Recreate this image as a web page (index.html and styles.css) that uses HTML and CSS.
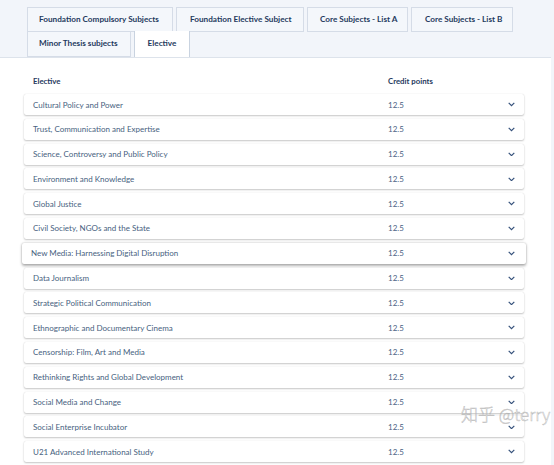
FILE: index.html
```html
<!DOCTYPE html>
<html>
<head>
<meta charset="utf-8">
<link rel="stylesheet" href="styles.css">
</head>
<body>
<div class="tabs">
  <div class="tab-row">
    <div class="tab">Foundation Compulsory Subjects</div>
    <div class="tab">Foundation Elective Subject</div>
    <div class="tab">Core Subjects - List A</div>
    <div class="tab">Core Subjects - List B</div>
  </div>
  <div class="tab-row second">
    <div class="tab">Minor Thesis subjects</div>
    <div class="tab active">Elective</div>
  </div>
</div>
<div class="content">
  <div class="head">
    <span class="c-name">Elective</span>
    <span class="c-cp">Credit points</span>
  </div>
  <div class="list">
    <div class="row"><span class="c-name">Cultural Policy and Power</span><span class="c-cp">12.5</span><span class="chev"><svg viewBox="0 0 10 6" width="7" height="4.5"><path d="M1 1l4 4 4-4" fill="none" stroke="#34507a" stroke-width="1.7"/></svg></span></div>
    <div class="row"><span class="c-name">Trust, Communication and Expertise</span><span class="c-cp">12.5</span><span class="chev"><svg viewBox="0 0 10 6" width="7" height="4.5"><path d="M1 1l4 4 4-4" fill="none" stroke="#34507a" stroke-width="1.7"/></svg></span></div>
    <div class="row"><span class="c-name">Science, Controversy and Public Policy</span><span class="c-cp">12.5</span><span class="chev"><svg viewBox="0 0 10 6" width="7" height="4.5"><path d="M1 1l4 4 4-4" fill="none" stroke="#34507a" stroke-width="1.7"/></svg></span></div>
    <div class="row"><span class="c-name">Environment and Knowledge</span><span class="c-cp">12.5</span><span class="chev"><svg viewBox="0 0 10 6" width="7" height="4.5"><path d="M1 1l4 4 4-4" fill="none" stroke="#34507a" stroke-width="1.7"/></svg></span></div>
    <div class="row"><span class="c-name">Global Justice</span><span class="c-cp">12.5</span><span class="chev"><svg viewBox="0 0 10 6" width="7" height="4.5"><path d="M1 1l4 4 4-4" fill="none" stroke="#34507a" stroke-width="1.7"/></svg></span></div>
    <div class="row"><span class="c-name">Civil Society, NGOs and the State</span><span class="c-cp">12.5</span><span class="chev"><svg viewBox="0 0 10 6" width="7" height="4.5"><path d="M1 1l4 4 4-4" fill="none" stroke="#34507a" stroke-width="1.7"/></svg></span></div>
    <div class="row hover"><span class="c-name">New Media: Harnessing Digital Disruption</span><span class="c-cp">12.5</span><span class="chev"><svg viewBox="0 0 10 6" width="7" height="4.5"><path d="M1 1l4 4 4-4" fill="none" stroke="#34507a" stroke-width="1.7"/></svg></span></div>
    <div class="row"><span class="c-name">Data Journalism</span><span class="c-cp">12.5</span><span class="chev"><svg viewBox="0 0 10 6" width="7" height="4.5"><path d="M1 1l4 4 4-4" fill="none" stroke="#34507a" stroke-width="1.7"/></svg></span></div>
    <div class="row"><span class="c-name">Strategic Political Communication</span><span class="c-cp">12.5</span><span class="chev"><svg viewBox="0 0 10 6" width="7" height="4.5"><path d="M1 1l4 4 4-4" fill="none" stroke="#34507a" stroke-width="1.7"/></svg></span></div>
    <div class="row"><span class="c-name">Ethnographic and Documentary Cinema</span><span class="c-cp">12.5</span><span class="chev"><svg viewBox="0 0 10 6" width="7" height="4.5"><path d="M1 1l4 4 4-4" fill="none" stroke="#34507a" stroke-width="1.7"/></svg></span></div>
    <div class="row"><span class="c-name">Censorship: Film, Art and Media</span><span class="c-cp">12.5</span><span class="chev"><svg viewBox="0 0 10 6" width="7" height="4.5"><path d="M1 1l4 4 4-4" fill="none" stroke="#34507a" stroke-width="1.7"/></svg></span></div>
    <div class="row"><span class="c-name">Rethinking Rights and Global Development</span><span class="c-cp">12.5</span><span class="chev"><svg viewBox="0 0 10 6" width="7" height="4.5"><path d="M1 1l4 4 4-4" fill="none" stroke="#34507a" stroke-width="1.7"/></svg></span></div>
    <div class="row"><span class="c-name">Social Media and Change</span><span class="c-cp">12.5</span><span class="chev"><svg viewBox="0 0 10 6" width="7" height="4.5"><path d="M1 1l4 4 4-4" fill="none" stroke="#34507a" stroke-width="1.7"/></svg></span></div>
    <div class="row"><span class="c-name">Social Enterprise Incubator</span><span class="c-cp">12.5</span><span class="chev"><svg viewBox="0 0 10 6" width="7" height="4.5"><path d="M1 1l4 4 4-4" fill="none" stroke="#34507a" stroke-width="1.7"/></svg></span></div>
    <div class="row"><span class="c-name">U21 Advanced International Study</span><span class="c-cp">12.5</span><span class="chev"><svg viewBox="0 0 10 6" width="7" height="4.5"><path d="M1 1l4 4 4-4" fill="none" stroke="#34507a" stroke-width="1.7"/></svg></span></div>
  </div>
</div>
<div class="watermark">知乎 @terry</div>
</body>
</html>
```
FILE: styles.css
```css
html, body {
  margin: 0;
  padding: 0;
}
body {
  width: 554px;
  height: 465px;
  overflow: hidden;
  background: #f2f5fa;
  font-family: "Lato", "Noto Sans", sans-serif;
  position: relative;
}
.tabs {
  padding: 7px 0 0 27px;
  height: 50px;
}
.tab-row {
  display: flex;
  gap: 3px;
  height: 25px;
}
.tab {
  box-sizing: border-box;
  height: 25px;
  line-height: 23px;
  padding: 0 11px;
  border: 1px solid #d5dce7;
  background: #f4f7fb;
  color: #1f3a5e;
  font-size: 8.2px;
  font-weight: 700;
  white-space: nowrap;
}
.tab-row:first-child .tab:nth-child(1) { width: 146px; }
.tab-row:first-child .tab:nth-child(2) { width: 128px; padding-left: 13px; }
.tab-row:first-child .tab:nth-child(3) { width: 101px; padding-left: 12px; }
.tab-row:first-child .tab:nth-child(4) { width: 102px; padding-left: 13px; }
.tab-row.second .tab { border-top: none; }
.tab-row.second .tab:nth-child(1) { width: 104px; }
.tab.active {
  background: #ffffff;
  border: 1px solid #c9d3e0;
  border-bottom: none;
  height: 26px;
  margin-top: -1px;
  width: 56px;
  padding: 0;
  text-align: center;
  position: relative;
  z-index: 2;
  line-height: 25px;
}
.content {
  background: #ffffff;
  border-top: 1px solid #dde3eb;
  margin-right: 3px;
  height: 408px;
  position: relative;
  z-index: 1;
}
.head {
  display: flex;
  padding: 18px 0 0 33px;
  height: 12px;
  font-size: 7.8px;
  font-weight: 700;
  color: #1f3a5e;
}
.head .c-name { width: 355px; }
.list {
  display: flex;
  flex-direction: column;
  gap: 3.8px;
  padding: 6px 0 0 24px;
}
.row {
  box-sizing: border-box;
  width: 500px;
  height: 21px;
  display: flex;
  align-items: center;
  padding: 0 9px;
  background: #ffffff;
  border-radius: 2px;
  box-shadow: 0 1px 2px rgba(0, 0, 0, 0.22), 0 0 1px rgba(0, 0, 0, 0.15);
  font-size: 8px;
  color: #475f80;
}
.row .c-name { width: 355px; white-space: nowrap; }
.row .c-cp { flex: 1; color: #4b6283; }
.chev {
  display: flex;
  align-items: center;
  margin-right: 0;
}
.row.hover {
  width: 504px;
  margin-left: -2px;
  padding-left: 9px;
  padding-right: 11px;
  box-shadow: 0 1.5px 3px rgba(0, 0, 0, 0.3), 0 0 2px rgba(0, 0, 0, 0.2);
}
.row.hover .c-name { width: 357px; }
.watermark {
  position: absolute;
  left: 461px;
  top: 401px;
  font-family: "Noto Sans CJK SC", "Noto Sans", sans-serif;
  font-size: 17px;
  font-weight: 300;
  color: rgba(255, 255, 255, 0.5);
  -webkit-text-stroke: 0.5px rgba(140, 140, 140, 0.6);
  white-space: nowrap;
  z-index: 5;
}
```
